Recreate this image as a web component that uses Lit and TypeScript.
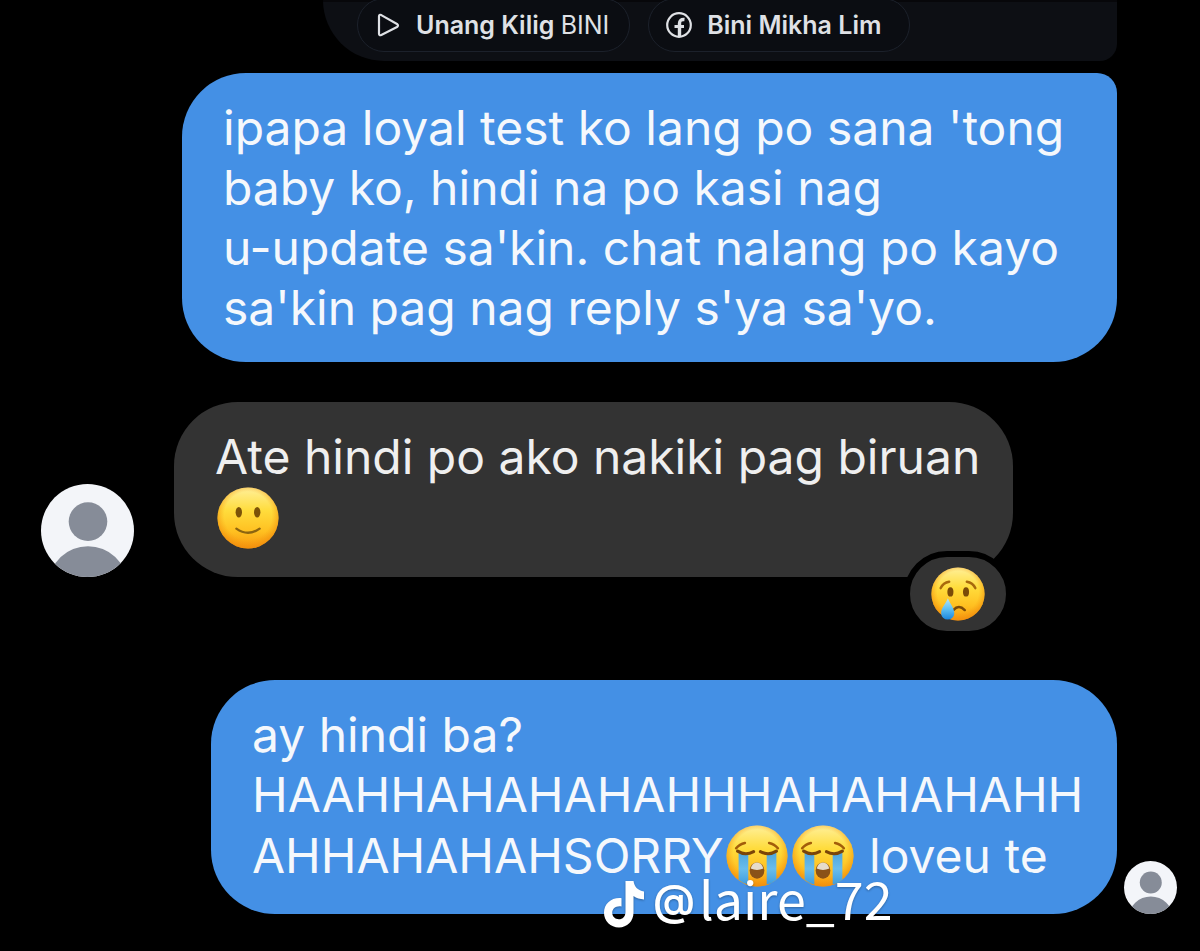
import { LitElement, html, svg, css } from "lit";
import { customElement, property } from "lit/decorators.js";

type Mood = "smile" | "cry" | "sob";

@customElement("face-emoji")
class FaceEmoji extends LitElement {
  @property() mood: Mood = "smile";

  static styles = css`
    :host {
      display: inline-block;
      width: 62px;
      height: 62px;
      margin: 0 2px;
      vertical-align: -14px;
      line-height: 0;
    }
    :host([small]) {
      width: 54px;
      height: 54px;
      margin: 0;
      vertical-align: top;
    }
    svg {
      width: 100%;
      height: 100%;
    }
  `;

  private features() {
    if (this.mood === "smile") {
      return svg`
        <ellipse cx="22.500" cy="26" rx="3.300" ry="5.400" fill="#7b5208"/>
        <ellipse cx="41.500" cy="26" rx="3.300" ry="5.400" fill="#7b5208"/>
        <path d="M20 43Q32 51.500 44 43" fill="none" stroke="#8c6410" stroke-width="2.400" stroke-linecap="round"/>`;
    }
    if (this.mood === "cry") {
      return svg`
        <path d="M11.500 25Q14.500 18.500 21.500 17.500M42.500 17.500Q49.500 18.500 52.500 25" fill="none" stroke="#a8690c" stroke-width="3" stroke-linecap="round"/>
        <ellipse cx="23" cy="29.500" rx="3.600" ry="5.600" fill="#7b4a08"/>
        <ellipse cx="41.500" cy="29.500" rx="3.600" ry="5.600" fill="#7b4a08"/>
        <path d="M26.500 51Q33 44 40 51" fill="none" stroke="#7b4a08" stroke-width="3" stroke-linecap="round"/>
        <path d="M20 37C17 44 12 49 12 54.500a7.800 7.800 0 0 0 15.600 0C27.500 49 23 44 20 37Z" fill="url(#drop)"/>`;
    }
    return svg`
      <path d="M10.500 24Q14 19.500 19.500 18.500M44.500 18.500Q50 19.500 53.500 24" fill="none" stroke="#a35d0a" stroke-width="2.600" stroke-linecap="round"/>
      <path d="M13 29h10v32.500q-6-1.500-10-5Z" fill="url(#tears)"/>
      <path d="M42 29h10v27.500q-4 3.500-10 5Z" fill="url(#tears)"/>
      <path d="M12 27Q20 32 28.500 27.500M35.500 27.500Q44 32 52 27" fill="none" stroke="#7b4508" stroke-width="3.200" stroke-linecap="round"/>
      <ellipse cx="32" cy="47" rx="7.600" ry="8.400" fill="#8a5218"/>
      <path d="M25.500 45Q27 38.600 32 38.600Q37 38.600 38.500 45Q32 48 25.500 45Z" fill="#e6dccb"/>`;
  }

  render() {
    return html`<svg viewBox="0 0 64 64" role="img" aria-label=${this.mood}>
      <defs>
        <linearGradient id="skin" x1="0" y1="0" x2="0" y2="1">
          <stop offset="0" stop-color="#fff09a"/>
          <stop offset=".38" stop-color="#ffdc3c"/>
          <stop offset=".72" stop-color="#ffc021"/>
          <stop offset="1" stop-color="#f8970e"/>
        </linearGradient>
        <radialGradient id="edge" cx=".5" cy=".46" r=".54">
          <stop offset=".72" stop-color="#f59a12" stop-opacity="0"/>
          <stop offset="1" stop-color="#f08c0c" stop-opacity=".75"/>
        </radialGradient>
        <linearGradient id="drop" x1="0" y1="0" x2="0" y2="1">
          <stop offset="0" stop-color="#b5e6fa"/>
          <stop offset=".5" stop-color="#5fc0f2"/>
          <stop offset="1" stop-color="#1a86dd"/>
        </linearGradient>
        <linearGradient id="tears" x1="0" y1="0" x2="0" y2="1">
          <stop offset="0" stop-color="#4fa5dc"/>
          <stop offset=".5" stop-color="#69bdec"/>
          <stop offset="1" stop-color="#3d9ce0"/>
        </linearGradient>
      </defs>
      <circle cx="32" cy="32" r="31.500" fill="url(#skin)"/>
      <circle cx="32" cy="32" r="31.500" fill="url(#edge)"/>
      ${this.features()}
    </svg>`;
  }
}

@customElement("user-avatar")
class UserAvatar extends LitElement {
  static styles = css`
    :host {
      display: block;
      flex: none;
      border-radius: 50%;
      overflow: hidden;
      background: #f3f5f9;
    }
    svg {
      display: block;
      width: 100%;
      height: 100%;
    }
  `;
  render() {
    return html`<svg viewBox="0 0 94 94" role="img" aria-label="Avatar">
      <circle cx="47.500" cy="38" r="19.500" fill="#868c98"/>
      <ellipse cx="47.500" cy="100" rx="39" ry="37" fill="#868c98"/>
    </svg>`;
  }
}

@customElement("app-root")
class AppRoot extends LitElement {
  static styles = css`
    :host {
      display: block;
      position: relative;
      min-height: 100vh;
      background: #000;
      color: #f5f8fc;
      font-family: Inter, "Liberation Sans", sans-serif;
      overflow: hidden;
    }
    .chat {
      display: flex;
      flex-direction: column;
      padding: 0 83px 0 41px;
    }
    .card {
      align-self: flex-end;
      box-sizing: border-box;
      display: flex;
      gap: 18px;
      width: 794px;
      max-width: 100%;
      height: 61px;
      padding: 0 34px;
      border-top: 2px solid #07070a;
      background: #0d0f14;
      border-radius: 0 0 18px 64px;
    }
    .chip {
      box-sizing: border-box;
      display: flex;
      align-items: center;
      gap: 14px;
      height: 54px;
      min-width: 262px;
      margin-top: -4px;
      padding: 0 20px 0 16px;
      border: 1px solid #1c212b;
      border-radius: 27px;
      background: #0b0d12;
      color: #dfe1e5;
      font: 600 25px/30px Inter, "Liberation Sans", sans-serif;
      white-space: nowrap;
      text-decoration: none;
    }
    .chip svg {
      flex: none;
      width: 28px;
      height: 28px;
    }
    .light {
      font-weight: 400;
    }
    .row {
      display: flex;
      align-items: flex-end;
    }
    .mine {
      justify-content: flex-end;
    }
    .first {
      margin-top: 12px;
    }
    .second {
      gap: 40px;
      margin-top: 40px;
    }
    .third {
      margin: 103px -60px 0 0;
      gap: 7px;
    }
    .bubble {
      position: relative;
      box-sizing: border-box;
      max-width: 100%;
      margin: 0;
      padding: 25px 32px 24px 41px;
      border-radius: 64px;
      font-size: 48px;
      line-height: 60px;
    }
    .blue {
      background: #4490e5;
    }
    .gray {
      padding-bottom: 28px;
      background: #333;
      color: #efefef;
    }
    .first .bubble {
      width: 935px;
      border-radius: 64px 20px 64px 64px;
    }
    .second .bubble {
      width: 839px;
    }
    .third .bubble {
      width: 906px;
      padding-bottom: 27px;
    }
    .big {
      width: 93px;
      height: 93px;
    }
    .tiny {
      width: 53px;
      height: 53px;
    }
    .reaction {
      position: absolute;
      right: 1px;
      bottom: -60px;
      display: flex;
      align-items: center;
      justify-content: center;
      width: 108px;
      height: 86px;
      padding: 0;
      border: 6px solid #000;
      border-radius: 43px;
      background: #333;
      box-sizing: border-box;
    }
    .watermark {
      position: absolute;
      left: 604px;
      top: 868px;
      display: flex;
      align-items: center;
      gap: 8px;
      color: #fff;
      font: 400 52px/72px "Noto Sans CJK SC", sans-serif;
      filter: drop-shadow(0 1px 1px rgba(0, 0, 0, 0.3));
    }
    .watermark svg {
      width: 41px;
      height: 47px;
    }
    .name {
      line-height: 60px;
      height: 72px;
    }
    .at {
      margin-right: 4px;
      font: 600 42px/60px Inter, sans-serif;
      font-feature-settings: "case";
    }
  `;

  render() {
    return html`
      <main class="chat">
        <nav class="card">
          <a class="chip" href="#kilig">
            <svg viewBox="0 0 28 28" fill="none" stroke="#dfe1e5" stroke-width="2.200" stroke-linejoin="round">
              <path d="M5 5.500v17q0 2.500 2.300 1.400L23 16q2-1.500 0-3L7.300 4.100Q5 3 5 5.500Z"/>
            </svg>
            <span>Unang Kilig <span class="light">BINI</span></span>
          </a>
          <a class="chip" href="#mikha">
            <svg viewBox="0 0 28 28" fill="none" stroke="#dfe1e5">
              <circle cx="14" cy="14" r="11.800" stroke-width="2.200"/>
              <path d="M14.500 25.500V12.500q0-4.500 5-4" stroke-width="3.400"/>
              <path d="M9.500 15.500h9.500" stroke-width="3"/>
            </svg>
            <span>Bini Mikha Lim</span>
          </a>
        </nav>

        <section class="row mine first">
          <p class="bubble blue">
            ipapa loyal test ko lang po sana 'tong<br />baby ko, hindi na po kasi nag<br />u-update sa'kin. chat nalang po kayo<br />sa'kin pag nag reply s'ya sa'yo.
          </p>
        </section>

        <section class="row second">
          <user-avatar class="big"></user-avatar>
          <div class="bubble gray">
            Ate hindi po ako nakiki pag biruan<br /><face-emoji mood="smile"></face-emoji>
            <button class="reaction" aria-label="Reaction">
              <face-emoji mood="cry" small></face-emoji>
            </button>
          </div>
        </section>

        <section class="row mine third">
          <p class="bubble blue">
            ay hindi ba?<br />HAAHHAHAHAHAHHHAHAHAHAHH<br />AHHAHAHAHSORRY<face-emoji mood="sob"></face-emoji
            ><face-emoji mood="sob"></face-emoji> loveu te
          </p>
          <user-avatar class="tiny"></user-avatar>
        </section>
      </main>

      <div class="watermark">
        <svg viewBox="0 0 41 47" fill="#fff" aria-hidden="true">
          <path d="M21.500 0h8c.8 5.800 4.600 9.800 10.500 10.400v8c-4 0-7.600-1.200-10.500-3.300v16.500C29.500 40.500 23 46.500 15 46.500 6.500 46.500 0 40 0 31.800c0-9 7.500-15.600 17.500-14.600v8.300c-5.300-1-9.300 2-9.300 6.300 0 3.600 2.900 6.500 6.600 6.500 4 0 6.700-2.800 6.700-7.300Z"/>
        </svg>
        <span class="name"><span class="at">@</span>laire_72</span>
      </div>
    `;
  }
}
